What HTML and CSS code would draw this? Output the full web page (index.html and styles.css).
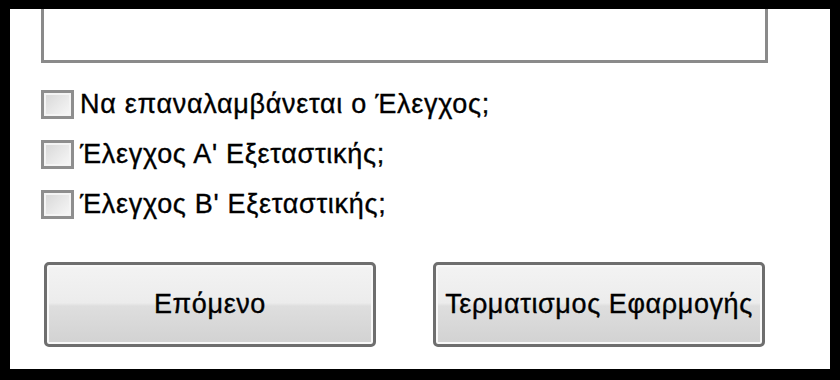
FILE: index.html
```html
<!DOCTYPE html>
<html lang="el">
<head>
<meta charset="utf-8">
<title>Έλεγχος</title>
<link rel="stylesheet" href="styles.css">
</head>
<body>
<div class="frame">
  <div class="window">
    <div class="textbox"></div>
    <div class="checks">
      <label class="check"><span class="box"></span><span class="label">Να επαναλαμβάνεται ο Έλεγχος;</span></label>
      <label class="check"><span class="box"></span><span class="label">Έλεγχος Α' Εξεταστικής;</span></label>
      <label class="check"><span class="box"></span><span class="label">Έλεγχος Β' Εξεταστικής;</span></label>
    </div>
    <div class="buttons">
      <button class="btn btn-next">Επόμενο</button>
      <button class="btn btn-exit">Τερματισμος Εφαρμογής</button>
    </div>
  </div>
</div>
</body>
</html>
```

FILE: styles.css
```css
html, body {
  margin: 0;
  padding: 0;
  background: #000;
}
.frame {
  width: 840px;
  height: 380px;
  box-sizing: border-box;
  padding: 9px 10px 11px 10px;
}
.window {
  background: #fff;
  height: 360px;
  overflow: hidden;
  display: flex;
  flex-direction: column;
  font-family: "Liberation Sans", Arial, sans-serif;
  color: #000;
}
.textbox {
  margin-top: -20px;
  margin-left: 31px;
  width: 727px;
  height: 74px;
  box-sizing: border-box;
  border: 3px solid #8a8a8a;
  background: #fff;
  flex: none;
}
.checks {
  display: flex;
  flex-direction: column;
  gap: 21px;
  margin-top: 27px;
  margin-left: 31px;
}
.check {
  display: flex;
  align-items: center;
  height: 29px;
}
.box {
  width: 33px;
  height: 29px;
  box-sizing: border-box;
  border: 3px solid #8e8e8e;
  background: linear-gradient(135deg, #d6d6d6 0%, #e6e6e6 45%, #f8f8f8 100%);
  box-shadow: inset 0 0 0 2px #f4f4f4;
  flex: none;
}
.label {
  margin-left: 6px;
  font-size: 27px;
  letter-spacing: 0.7px;
  white-space: nowrap;
  -webkit-text-stroke: 0.35px #000;
}
.buttons {
  display: flex;
  margin-top: 43px;
  margin-left: 34px;
  gap: 57px;
}
.btn {
  width: 332px;
  height: 85px;
  box-sizing: border-box;
  border: 3px solid #6e6e6e;
  border-radius: 5px;
  background: linear-gradient(to bottom, #f3f3f3 0%, #ececec 48%, #dedede 52%, #d2d2d2 100%);
  box-shadow: inset 0 0 0 2px #f8f8f8;
  font-family: "Liberation Sans", Arial, sans-serif;
  font-size: 27px;
  letter-spacing: 0.6px;
  color: #000;
  padding: 0;
  white-space: nowrap;
  -webkit-text-stroke: 0.35px #000;
}
```
